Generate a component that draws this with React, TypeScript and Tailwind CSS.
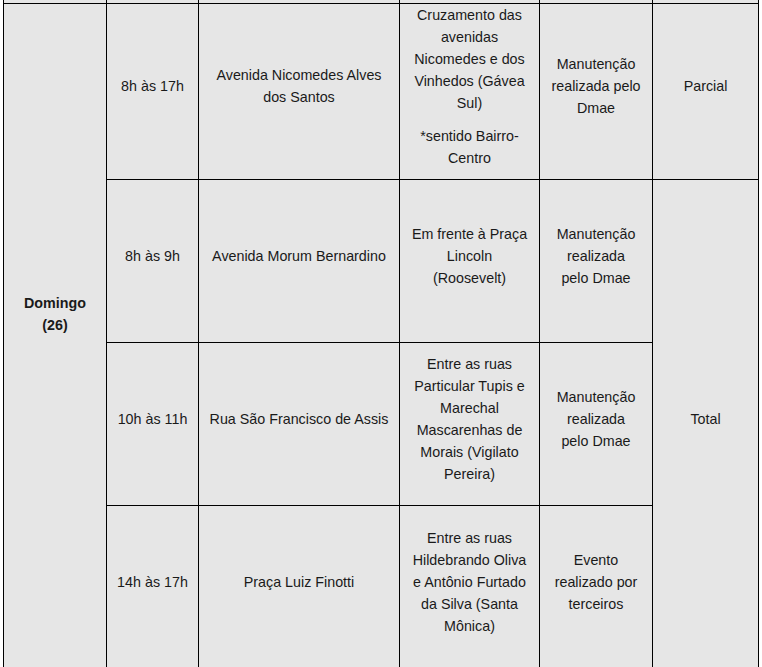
import type { ReactNode } from "react";

const cell = "border border-black px-[9px] py-0 align-middle";
const low = "border border-black px-[9px] pt-[2px] pb-0 align-middle";

function P({ children, last }: { children: ReactNode; last?: boolean }) {
  return <p className={last ? "mb-[10px]" : "mb-[11px]"}>{children}</p>;
}

interface Row {
  time: string;
  street: string;
  place: ReactNode;
  reason: string;
  height: string;
}

const ROWS: Row[] = [
  {
    time: "8h às 9h",
    street: "Avenida Morum Bernardino",
    place: <P>Em frente à Praça Lincoln (Roosevelt)</P>,
    reason: "Manutenção realizada pelo\u00a0Dmae",
    height: "h-[163px]",
  },
  {
    time: "10h às 11h",
    street: "Rua São Francisco de Assis",
    place: <P>Entre as ruas Particular Tupis e Marechal Mascarenhas de Morais (Vigilato Pereira)</P>,
    reason: "Manutenção realizada pelo\u00a0Dmae",
    height: "h-[163px]",
  },
  {
    time: "14h às 17h",
    street: "Praça Luiz Finotti",
    place: <P>Entre as ruas Hildebrando Oliva e Antônio Furtado da Silva (Santa Mônica)</P>,
    reason: "Evento realizado por terceiros",
    height: "h-[162px]",
  },
];

export default function App() {
  return (
    <div className="h-screen overflow-hidden bg-white px-[3px]">
      <table className="w-full table-fixed border-collapse bg-[#e6e6e6] text-center font-[family-name:Liberation_Sans,Arial,sans-serif] text-[14.3px] leading-[22px] text-[#1a1a1a]">
        <colgroup>
          <col className="w-[103px]" />
          <col className="w-[92px]" />
          <col className="w-[201px]" />
          <col className="w-[140px]" />
          <col className="w-[113px]" />
          <col className="w-[106px]" />
        </colgroup>
        <tbody>
          {/* fim da linha anterior, cortada pela rolagem */}
          <tr className="h-[3px]">
            {Array.from({ length: 6 }).map((_, i) => (
              <td key={i} className="border-x border-b border-black p-0" />
            ))}
          </tr>
          <tr className="h-[175px]">
            <td rowSpan={4} className={`${low} font-bold`}>
              <P>
                Domingo
                <br />
                (26)
              </P>
              <P>{"\u00a0"}</P>
            </td>
            <td className={cell}>
              <P>8h às 17h</P>
            </td>
            <td className={cell}>
              <P>Avenida Nicomedes Alves dos Santos</P>
            </td>
            <td className={cell}>
              <P>Cruzamento das avenidas Nicomedes e dos Vinhedos (Gávea Sul)</P>
              <P last>*sentido Bairro-Centro</P>
            </td>
            <td className={cell}>
              <P>Manutenção realizada pelo Dmae</P>
            </td>
            <td className={cell}>
              <P>Parcial</P>
            </td>
          </tr>
          {ROWS.map((r, i) => (
            <tr key={r.time} className={r.height}>
              <td className={low}>
                <P>{r.time}</P>
              </td>
              <td className={low}>
                <P>{r.street}</P>
              </td>
              <td className={low}>{r.place}</td>
              <td className={low}>
                <P>{r.reason}</P>
              </td>
              {i === 0 && (
                <td rowSpan={3} className={low}>
                  <P>Total</P>
                </td>
              )}
            </tr>
          ))}
        </tbody>
      </table>
    </div>
  );
}
